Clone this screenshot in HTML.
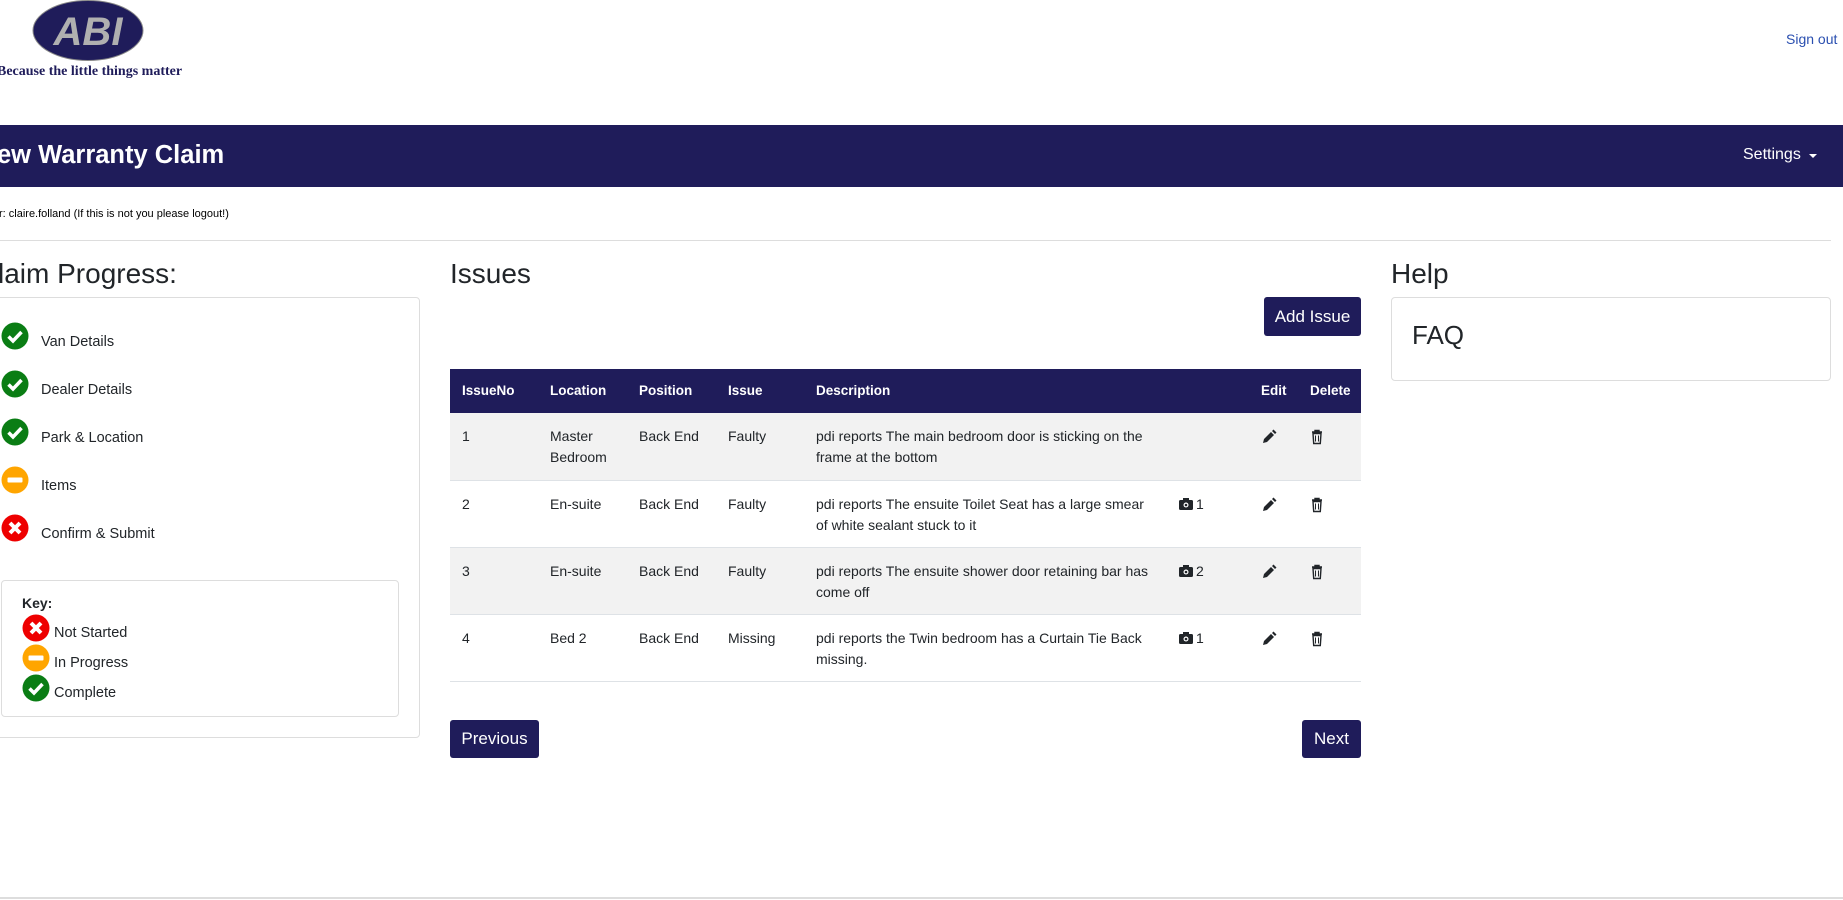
<!DOCTYPE html>
<html><head><meta charset="utf-8"><style>
*{box-sizing:border-box;margin:0;padding:0}
body{width:1843px;height:900px;overflow:hidden;background:#fff;font-family:"Liberation Sans",Arial,sans-serif;color:#212529;position:relative}
.a{position:absolute;white-space:nowrap}
.nav{position:absolute;left:0;top:125px;width:1843px;height:62px;background:#1f1c5a}
.btn{position:absolute;background:#1f1c5a;color:#fff;border-radius:3px;font-size:17px;display:flex;align-items:center;justify-content:center}
.card{position:absolute;border:1px solid #ddd;border-radius:4px;background:#fff}
.row{position:absolute;left:450px;width:911px;border-bottom:1px solid #dee2e6}
.t{position:absolute;font-size:14px;line-height:21px;white-space:nowrap}
.h{position:absolute;font-size:13.5px;font-weight:bold;color:#fff;top:14px}
</style></head><body>
<svg class="a" style="left:31px;top:0" width="114" height="62"><ellipse cx="57" cy="30.5" rx="55" ry="30" fill="#1f1c5a" stroke="#888" stroke-width="1"/><text x="57" y="45" text-anchor="middle" font-family="Liberation Sans" font-weight="bold" font-style="italic" font-size="40" fill="#b0b0b0">ABI</text></svg>
<div class="a" style="left:-3px;top:64px;font-family:'Liberation Serif',serif;font-weight:bold;font-size:14px;color:#1f1c5a">Because the little things matter</div>
<div class="a" style="left:1786px;top:31px;font-size:14px;color:#2a4fb0">Sign out</div>
<div class="nav"><div class="a" style="left:-3px;top:16px;font-size:25.5px;font-weight:bold;color:#fff">ew Warranty Claim</div>
<div class="a" style="left:1743px;top:21px;font-size:16px;color:#fff">Settings</div>
<div class="a" style="left:1809px;top:29px;border-left:4px solid transparent;border-right:4px solid transparent;border-top:4px solid #fff"></div></div>
<div class="a" style="left:-1px;top:208px;font-size:11px;color:#000">r: claire.folland (If this is not you please logout!)</div>
<div class="a" style="left:0;top:240px;width:1831px;height:1px;background:#ddd"></div>
<div class="a" style="left:-2px;top:258px;font-size:28px">laim Progress:</div>
<div class="card" style="left:-5px;top:297px;width:425px;height:441px"></div>
<svg width="0" height="0" style="position:absolute"><defs>
<g id="ok"><circle cx="14" cy="14" r="13.5" fill="#0a7d14"/><path d="M7.5 14.5l4.5 4.5 8.5-9" stroke="#fff" stroke-width="3.5" fill="none"/></g>
<g id="ip"><circle cx="14" cy="14" r="13.5" fill="#ffa500"/><rect x="6.5" y="11.5" width="15" height="5" rx="1" fill="#fff"/></g>
<g id="no"><circle cx="14" cy="14" r="13.5" fill="#ee0000"/><path d="M9 9l10 10M19 9l-10 10" stroke="#fff" stroke-width="4"/></g>
</defs></svg>
<svg class="a" style="left:1px;top:322px" width="28" height="28"><use href="#ok"/></svg>
<svg class="a" style="left:1px;top:370px" width="28" height="28"><use href="#ok"/></svg>
<svg class="a" style="left:1px;top:418px" width="28" height="28"><use href="#ok"/></svg>
<svg class="a" style="left:1px;top:466px" width="28" height="28"><use href="#ip"/></svg>
<svg class="a" style="left:1px;top:514px" width="28" height="28"><use href="#no"/></svg>
<div class="a" style="left:41px;top:334px;font-size:14.5px">Van Details</div>
<div class="a" style="left:41px;top:382px;font-size:14.5px">Dealer Details</div>
<div class="a" style="left:41px;top:430px;font-size:14.5px">Park &amp; Location</div>
<div class="a" style="left:41px;top:478px;font-size:14.5px">Items</div>
<div class="a" style="left:41px;top:526px;font-size:14.5px">Confirm &amp; Submit</div>
<div class="card" style="left:1px;top:580px;width:398px;height:137px"></div>
<div class="a" style="left:22px;top:595px;font-size:14px;font-weight:bold">Key:</div>
<svg class="a" style="left:22px;top:614px" width="28" height="28"><use href="#no"/></svg>
<svg class="a" style="left:22px;top:644px" width="28" height="28"><use href="#ip"/></svg>
<svg class="a" style="left:22px;top:674px" width="28" height="28"><use href="#ok"/></svg>
<div class="a" style="left:54px;top:625px;font-size:14.5px">Not Started</div>
<div class="a" style="left:54px;top:655px;font-size:14.5px">In Progress</div>
<div class="a" style="left:54px;top:685px;font-size:14.5px">Complete</div>
<div class="a" style="left:450px;top:258px;font-size:28px">Issues</div>
<div class="btn" style="left:1264px;top:297px;width:97px;height:39px">Add Issue</div>
<div class="a" style="left:450px;top:369px;width:911px;height:44px;background:#1f1c5a">
<div class="h" style="left:12px">IssueNo</div><div class="h" style="left:100px">Location</div><div class="h" style="left:189px">Position</div><div class="h" style="left:278px">Issue</div><div class="h" style="left:366px">Description</div><div class="h" style="left:811px">Edit</div><div class="h" style="left:860px">Delete</div></div>
<svg width="0" height="0" style="position:absolute"><defs>
<g id="pen"><path d="M2 14l1-4 7-7 3 3-7 7z M11 2l1.5-1.5 3 3L14 5z" fill="#212529"/></g>
<g id="bin"><path d="M3 3h10M6 3V1.5h4V3M4 4.5h8l-.7 10H4.7z" stroke="#212529" stroke-width="1.4" fill="none"/><path d="M6.5 6.5v6M9.5 6.5v6" stroke="#212529" stroke-width="1"/></g>
<g id="cam"><rect x="0" y="3" width="14" height="10" rx="1.5" fill="#212529"/><rect x="4" y="1" width="6" height="3" fill="#212529"/><circle cx="7" cy="8" r="2.5" fill="#fff"/><circle cx="7" cy="8" r="1.3" fill="#212529"/></g>
</defs></svg>
<div class="row" style="top:413px;height:68px;background:#f2f2f2">
<div class="t" style="left:12px;top:13px">1</div><div class="t" style="left:100px;top:13px">Master<br>Bedroom</div><div class="t" style="left:189px;top:13px">Back End</div><div class="t" style="left:278px;top:13px">Faulty</div><div class="t" style="left:366px;top:13px">pdi reports The main bedroom door is sticking on the<br>frame at the bottom</div>
<svg class="a" style="left:811px;top:16px" width="16" height="16"><use href="#pen"/></svg><svg class="a" style="left:859px;top:16px" width="16" height="16"><use href="#bin"/></svg></div>
<div class="row" style="top:481px;height:67px">
<div class="t" style="left:12px;top:13px">2</div><div class="t" style="left:100px;top:13px">En-suite</div><div class="t" style="left:189px;top:13px">Back End</div><div class="t" style="left:278px;top:13px">Faulty</div><div class="t" style="left:366px;top:13px">pdi reports The ensuite Toilet Seat has a large smear<br>of white sealant stuck to it</div>
<svg class="a" style="left:729px;top:16px" width="14" height="14"><use href="#cam"/></svg><div class="t" style="left:746px;top:13px">1</div>
<svg class="a" style="left:811px;top:16px" width="16" height="16"><use href="#pen"/></svg><svg class="a" style="left:859px;top:16px" width="16" height="16"><use href="#bin"/></svg></div>
<div class="row" style="top:548px;height:67px;background:#f2f2f2">
<div class="t" style="left:12px;top:13px">3</div><div class="t" style="left:100px;top:13px">En-suite</div><div class="t" style="left:189px;top:13px">Back End</div><div class="t" style="left:278px;top:13px">Faulty</div><div class="t" style="left:366px;top:13px">pdi reports The ensuite shower door retaining bar has<br>come off</div>
<svg class="a" style="left:729px;top:16px" width="14" height="14"><use href="#cam"/></svg><div class="t" style="left:746px;top:13px">2</div>
<svg class="a" style="left:811px;top:16px" width="16" height="16"><use href="#pen"/></svg><svg class="a" style="left:859px;top:16px" width="16" height="16"><use href="#bin"/></svg></div>
<div class="row" style="top:615px;height:67px">
<div class="t" style="left:12px;top:13px">4</div><div class="t" style="left:100px;top:13px">Bed 2</div><div class="t" style="left:189px;top:13px">Back End</div><div class="t" style="left:278px;top:13px">Missing</div><div class="t" style="left:366px;top:13px">pdi reports the Twin bedroom has a Curtain Tie Back<br>missing.</div>
<svg class="a" style="left:729px;top:16px" width="14" height="14"><use href="#cam"/></svg><div class="t" style="left:746px;top:13px">1</div>
<svg class="a" style="left:811px;top:16px" width="16" height="16"><use href="#pen"/></svg><svg class="a" style="left:859px;top:16px" width="16" height="16"><use href="#bin"/></svg></div>
<div class="btn" style="left:450px;top:720px;width:89px;height:38px">Previous</div>
<div class="btn" style="left:1302px;top:720px;width:59px;height:38px">Next</div>
<div class="a" style="left:1391px;top:258px;font-size:28px">Help</div>
<div class="card" style="left:1391px;top:297px;width:440px;height:84px"><div class="a" style="left:20px;top:22px;font-size:26px">FAQ</div></div>
<div class="a" style="left:0;top:897px;width:1843px;height:2px;background:#ddd"></div>
</body></html>
